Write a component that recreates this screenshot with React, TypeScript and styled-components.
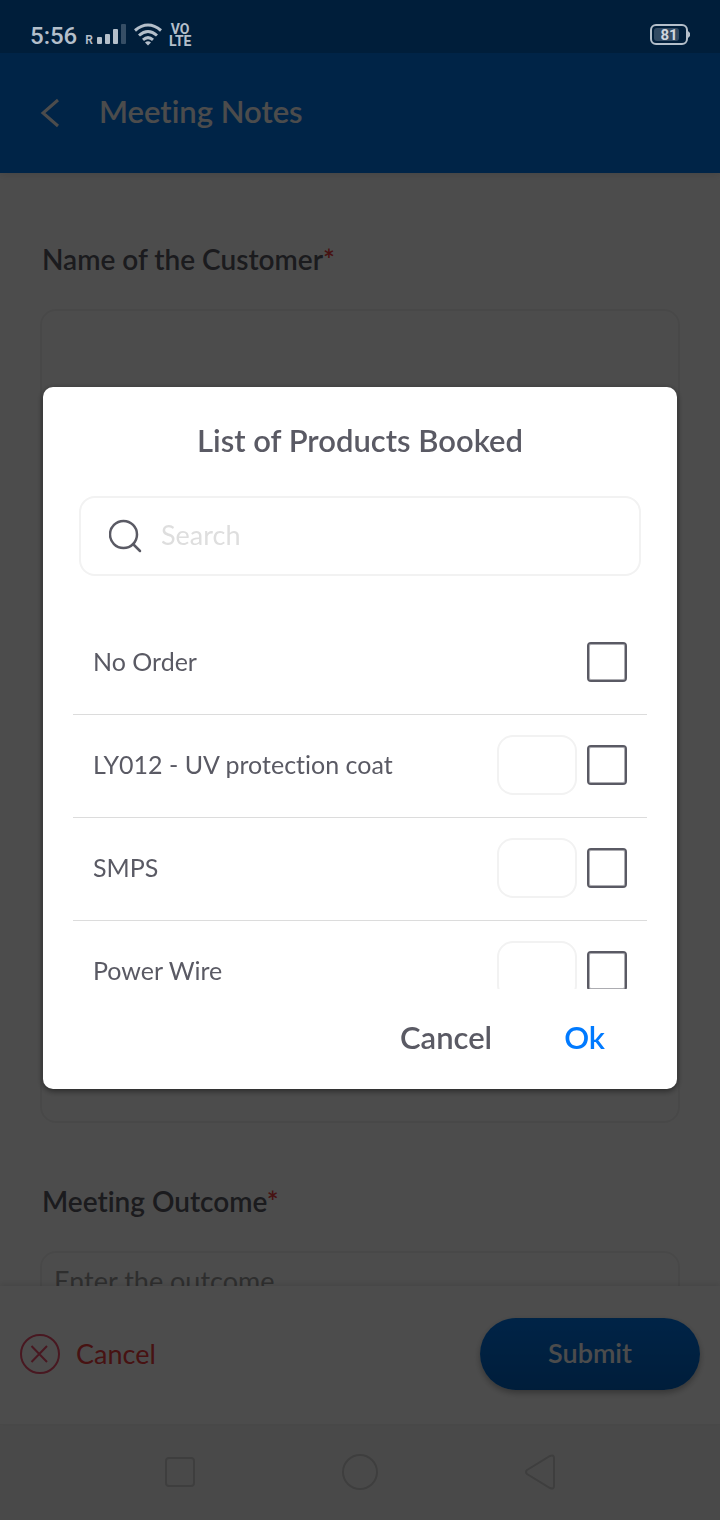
import React, { useState } from "react";
import styled, { createGlobalStyle } from "styled-components";

const GlobalStyle = createGlobalStyle`
  * { box-sizing: border-box; }
  body {
    margin: 0;
    background: #fff;
    font-family: Lato, "Open Sans", sans-serif;
    font-variant-ligatures: none;
    color: #5a5a64;
  }
  button, input, textarea { font-family: inherit; color: inherit; }
`;

const Screen = styled.div`
  display: flex;
  flex-direction: column;
  height: 100vh;
  overflow: hidden;
`;

/* The system status bar stays readable over the dimmed page. */
const StatusBar = styled.div`
  position: relative;
  z-index: 3;
  flex: none;
  display: flex;
  align-items: flex-end;
  justify-content: space-between;
  height: 53px;
  padding: 0 30px 5px;
  background: #001e3a;
  color: #b4bfca;
  font-family: Roboto, sans-serif;
`;

const StatusGroup = styled.div`
  display: flex;
  align-items: center;
  height: 26px;
`;

const Clock = styled.span`
  padding-top: 2px;
  font-size: 24px;
  font-weight: 500;
  line-height: 26px;
  margin-right: 8px;
`;

const Roaming = styled.span`
  align-self: flex-end;
  font-size: 12px;
  font-weight: 600;
  line-height: 16px;
  margin-right: 3px;
`;

const SignalIcon = styled.svg`
  width: 30px;
  height: 22px;
  margin-right: 7px;
`;

const WifiIcon = styled.svg`
  width: 30px;
  height: 24px;
  margin-right: 6px;
`;

const VoLte = styled.span`
  font-size: 14px;
  font-weight: 700;
  line-height: 12px;
  text-align: center;
`;

const Battery = styled.svg`
  width: 40px;
  height: 22px;
`;

const Header = styled.header`
  position: relative;
  z-index: 1;
  flex: none;
  display: flex;
  align-items: center;
  gap: 38px;
  height: 120px;
  padding: 0 40px;
  background: #0078ed;
  color: #fff;
  box-shadow: 0 2px 8px rgba(0, 0, 0, 0.1);
`;

const BackButton = styled.button`
  display: flex;
  padding: 0;
  border: 0;
  background: none;
`;

const PageTitle = styled.h1`
  margin: 0;
  padding-bottom: 4px;
  font-size: 31px;
  font-weight: 600;
  line-height: 40px;
`;

const Form = styled.form`
  flex: 1;
  min-height: 0;
  overflow: hidden;
  padding: 66px 40px 0;
`;

const Field = styled.div`
  display: flex;
  flex-direction: column;
  gap: 30px;
  margin-bottom: 58px;
`;

const FieldLabel = styled.label`
  padding-left: 2px;
  font-size: 28px;
  font-weight: 600;
  line-height: 40px;
`;

const Required = styled.span`
  color: #ed3c3c;
`;

const FieldArea = styled.textarea<{ $tall?: boolean }>`
  display: block;
  width: 100%;
  height: ${(p) => (p.$tall ? 814 : 160)}px;
  padding: 12px;
  border: 2px solid #f2f2f2;
  border-radius: 16px;
  background: transparent;
  font-size: 27px;
  line-height: 32px;
  resize: none;
  overflow: hidden;
  &::placeholder { color: #9b9b9b; opacity: 1; }
`;

const Footer = styled.footer`
  position: relative;
  flex: none;
  display: flex;
  align-items: center;
  justify-content: space-between;
  height: 138px;
  padding: 0 20px 2px;
  background: #fff;
  box-shadow: 0 -2px 6px rgba(0, 0, 0, 0.1);
`;

const CancelForm = styled.button`
  display: flex;
  align-items: center;
  gap: 16px;
  padding: 0;
  border: 0;
  background: none;
  color: #ed3c3c;
  font-size: 27px;
  line-height: 38px;
`;

const SubmitButton = styled.button`
  width: 220px;
  height: 72px;
  padding: 0 0 3px;
  border: 0;
  border-radius: 36px;
  background: linear-gradient(#0078ed, #0063c4);
  box-shadow: 0 3px 6px rgba(0, 0, 0, 0.3);
  color: #fff;
  font-size: 27px;
  font-weight: 600;
`;

const SystemNav = styled.nav`
  flex: none;
  display: grid;
  grid-template-columns: repeat(3, 1fr);
  place-items: center;
  height: 96px;
  padding: 0 12.5%;
  background: #f5f5f5;
`;

const NavButton = styled.button`
  display: flex;
  padding: 0;
  border: 0;
  background: none;
  color: #cfcfcf;
`;

const Scrim = styled.div`
  position: fixed;
  inset: 0;
  z-index: 2;
  display: flex;
  align-items: center;
  justify-content: center;
  padding: 53px 43px 97px;
  background: rgba(0, 0, 0, 0.7);
`;

const Dialog = styled.section`
  display: flex;
  flex-direction: column;
  width: 100%;
  max-height: 100%;
  border-radius: 10px;
  background: #fff;
  box-shadow: 0 2px 6px rgba(0, 0, 0, 0.5);
`;

const DialogTitle = styled.h2`
  margin: 0;
  padding: 33px 36px 36px;
  font-size: 31px;
  font-weight: 600;
  line-height: 40px;
  text-align: center;
`;

const SearchBox = styled.label`
  flex: none;
  display: flex;
  align-items: center;
  gap: 18px;
  height: 80px;
  margin: 0 36px 36px;
  padding: 0 28px;
  border: 2px solid #f2f2f2;
  border-radius: 16px;
`;

const SearchInput = styled.input`
  flex: 1;
  min-width: 0;
  padding: 0 0 2px;
  border: 0;
  outline: 0;
  background: none;
  font-size: 27px;
  line-height: 32px;
  &::placeholder { color: #dedede; opacity: 1; }
`;

const ProductList = styled.ul`
  height: 377px;
  min-height: 0;
  margin: 0 30px;
  padding: 0;
  overflow: hidden;
  list-style: none;
`;

const ProductRow = styled.li`
  display: flex;
  align-items: center;
  gap: 10px;
  padding: 20px 20px 22px;
  border-bottom: 1px solid #dcdcdc;
`;

const ProductName = styled.label`
  flex: 1;
  padding-bottom: 2px;
  font-size: 25px;
  line-height: 58px;
`;

const Quantity = styled.input`
  width: 80px;
  height: 60px;
  padding: 0 8px;
  border: 2px solid #f2f2f2;
  border-radius: 16px;
  background: #fff;
  font-size: 25px;
  text-align: center;
`;

const Tick = styled.input`
  appearance: none;
  width: 40px;
  height: 40px;
  margin: 0;
  border: 2px solid #5a5a64;
  border-radius: 4px;
  background: #fff;
  box-shadow: inset 0 0 0 1px #acacb1;
  &:checked { background: #0078ed; }
`;

const DialogActions = styled.div`
  display: flex;
  align-items: center;
  justify-content: flex-end;
  gap: 72px;
  height: 100px;
  padding: 0 72px 4px;
`;

const DialogButton = styled.button<{ $primary?: boolean }>`
  padding: 0;
  border: 0;
  background: none;
  color: ${(p) => (p.$primary ? "#007aff" : "#5a5a64")};
  font-size: 31px;
  font-weight: 600;
  line-height: 40px;
`;

const products = [
  { id: "none", name: "No Order", countable: false },
  { id: "uv", name: "LY012 - UV protection coat", countable: true },
  { id: "smps", name: "SMPS", countable: true },
  { id: "wire", name: "Power Wire", countable: true },
];

function StatusIcons() {
  return (
    <StatusGroup>
      <Clock>5:56</Clock>
      <Roaming>R</Roaming>
      <SignalIcon viewBox="0 0 30 22" fill="currentColor" aria-hidden="true">
        <rect x="1" y="13" width="5" height="7" rx="1" />
        <rect x="9" y="10" width="5" height="10" rx="1" />
        <rect x="17" y="5" width="5" height="15" rx="1" />
        <rect x="25" y="0" width="5" height="20" rx="1" opacity="0.3" />
      </SignalIcon>
      <WifiIcon viewBox="0 0 30 24" fill="none" stroke="currentColor" strokeWidth="3" aria-hidden="true">
        <path d="M2 7.500Q15-3.500 28 7.500" />
        <path d="M6 12.500Q15 4.500 24 12.500" />
        <path d="M10 16.800Q15 12.500 20 16.800" />
        <path d="M12 19.500Q15 17 18 19.500L15 22.500Z" fill="currentColor" stroke="none" />
      </WifiIcon>
      <VoLte>
        VO
        <br />
        LTE
      </VoLte>
    </StatusGroup>
  );
}

export default function App() {
  const [query, setQuery] = useState("");
  const shown = products.filter((p) => p.name.toLowerCase().includes(query.toLowerCase()));

  return (
    <>
      <GlobalStyle />
      <Screen>
        <StatusBar>
          <StatusIcons />
          <StatusGroup>
            <Battery viewBox="0 0 40 22" role="img" aria-label="Battery 81%">
              <rect x="1" y="1" width="36" height="19" rx="5" fill="none" stroke="currentColor" strokeWidth="2" />
              <path d="M38 7L40 9V12L38 14Z" fill="currentColor" />
              <rect x="4" y="4" width="25" height="13" rx="3" fill="#324a62" />
              <text x="19" y="16" textAnchor="middle" fontSize="15" fontWeight="700" fill="#d0d6dc">81</text>
            </Battery>
          </StatusGroup>
        </StatusBar>

        <Header>
          <BackButton type="button" aria-label="Back">
            <svg width="21" height="30" viewBox="0 0 21 30" fill="none" stroke="currentColor" strokeWidth="3">
              <path d="M18 2L3 15L18 28" />
            </svg>
          </BackButton>
          <PageTitle>Meeting Notes</PageTitle>
        </Header>

        <Form>
          <Field>
            <FieldLabel htmlFor="customer">
              Name of the Customer<Required>*</Required>
            </FieldLabel>
            <FieldArea id="customer" $tall />
          </Field>
          <Field>
            <FieldLabel htmlFor="outcome">
              Meeting Outcome<Required>*</Required>
            </FieldLabel>
            <FieldArea id="outcome" placeholder="Enter the outcome" />
          </Field>
        </Form>

        <Footer>
          <CancelForm type="button">
            <svg width="40" height="40" viewBox="0 0 40 40" fill="none" stroke="#f0506e" strokeWidth="2" aria-hidden="true">
              <circle cx="20" cy="20" r="19" />
              <path d="M11.500 12L27 28M27 12L11.500 28" />
            </svg>
            Cancel
          </CancelForm>
          <SubmitButton type="button">Submit</SubmitButton>
        </Footer>

        <SystemNav aria-label="System">
          <NavButton type="button" aria-label="Recent apps">
            <svg width="30" height="30" viewBox="0 0 30 30" fill="none" stroke="currentColor" strokeWidth="2">
              <rect x="1" y="1" width="28" height="28" rx="3" />
            </svg>
          </NavButton>
          <NavButton type="button" aria-label="Home">
            <svg width="36" height="36" viewBox="0 0 36 36" fill="none" stroke="currentColor" strokeWidth="2">
              <circle cx="18" cy="18" r="17" />
            </svg>
          </NavButton>
          <NavButton type="button" aria-label="Back to previous screen">
            <svg width="30" height="36" viewBox="0 0 30 36" fill="none" stroke="currentColor" strokeWidth="2">
              <path d="M2 16L25 2Q29 .5 29 4V32Q29 35.500 25 34L2 20Q0 18 2 16Z" />
            </svg>
          </NavButton>
        </SystemNav>
      </Screen>

      <Scrim>
        <Dialog role="dialog" aria-modal="true" aria-labelledby="dialog-title">
          <DialogTitle id="dialog-title">List of Products Booked</DialogTitle>
          <SearchBox>
            <svg width="34" height="34" viewBox="0 0 34 34" fill="none" stroke="#5a5a64" strokeWidth="2.500" strokeLinecap="round" aria-hidden="true">
              <circle cx="14.500" cy="15.500" r="13.500" />
              <path d="M24 25L31 32" />
            </svg>
            <SearchInput
              type="text"
              aria-label="Search products"
              placeholder="Search"
              value={query}
              onChange={(e) => setQuery(e.target.value)}
            />
          </SearchBox>
          <ProductList>
            {shown.map((p) => (
              <ProductRow key={p.id}>
                <ProductName htmlFor={p.id}>{p.name}</ProductName>
                {p.countable && <Quantity type="text" inputMode="numeric" aria-label={`Quantity of ${p.name}`} />}
                <Tick type="checkbox" id={p.id} />
              </ProductRow>
            ))}
          </ProductList>
          <DialogActions>
            <DialogButton type="button">Cancel</DialogButton>
            <DialogButton type="button" $primary>Ok</DialogButton>
          </DialogActions>
        </Dialog>
      </Scrim>
    </>
  );
}
